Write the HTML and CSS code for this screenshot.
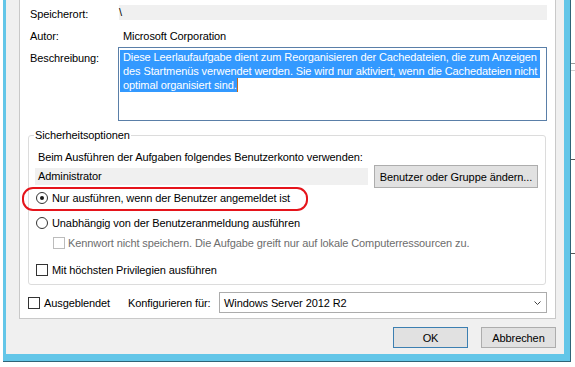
FILE: index.html
```html
<!DOCTYPE html>
<html lang="de">
<head>
    <meta charset="UTF-8">
    <meta name="viewport" content="width=device-width, initial-scale=1.0">
    <title>Eigenschaften</title>
    <link rel="stylesheet" href="styles.css">
</head>
<body>
    <div class="desktop">
        <div class="window">
            <div class="dialog">
                <div class="tab-page">
                    <div class="prop-row row-location">
                        <span class="prop-label">Speicherort:</span>
                        <span class="prop-field">\</span>
                    </div>
                    <div class="prop-row row-author">
                        <span class="prop-label">Autor:</span>
                        <span class="prop-value">Microsoft Corporation</span>
                    </div>
                    <div class="prop-row row-desc">
                        <span class="prop-label">Beschreibung:</span>
                        <div class="desc-box">
                            <span class="sel-line">Diese Leerlaufaufgabe dient zum Reorganisieren der Cachedateien, die zum Anzeigen </span>
                            <span class="sel-line">des Startmenüs verwendet werden. Sie wird nur aktiviert, wenn die Cachedateien nicht </span>
                            <span class="sel-line caret">optimal organisiert sind.</span>
                        </div>
                    </div>

                    <fieldset class="group">
                        <legend>Sicherheitsoptionen</legend>
                        <div class="group-text">Beim Ausführen der Aufgaben folgendes Benutzerkonto verwenden:</div>
                        <div class="account-row">
                            <div class="account-field">Administrator</div>
                            <button class="btn btn-wide">Benutzer oder Gruppe ändern...</button>
                        </div>
                        <div class="option opt-logged"><span class="radio checked"></span>Nur ausführen, wenn der Benutzer angemeldet ist</div>
                        <div class="option opt-any"><span class="radio"></span>Unabhängig von der Benutzeranmeldung ausführen</div>
                        <div class="option opt-nopass disabled"><span class="check"></span>Kennwort nicht speichern. Die Aufgabe greift nur auf lokale Computerressourcen zu.</div>
                        <div class="option opt-highest"><span class="check"></span>Mit höchsten Privilegien ausführen</div>
                    </fieldset>

                    <div class="config-row">
                        <div class="option hidden-opt"><span class="check"></span>Ausgeblendet</div>
                        <span class="config-label">Konfigurieren für:</span>
                        <div class="select">
                            <span>Windows Server 2012 R2</span>
                            <svg width="7" height="4" viewBox="0 0 7 4"><polyline points="0.5,0.5 3.5,3.5 6.5,0.5" fill="none" stroke="#404040" stroke-width="1"/></svg>
                        </div>
                    </div>

                    <!-- annotation drawn over the screenshot -->
                    <div class="callout"></div>
                </div>
                <div class="dialog-buttons">
                    <button class="btn btn-default">OK</button>
                    <button class="btn">Abbrechen</button>
                </div>
            </div>
        </div>
        <div class="backdrop">
            <div class="bd-line bd-a"></div>
            <div class="bd-line bd-b"></div>
            <div class="bd-line bd-c"></div>
            <div class="bd-line bd-d"></div>
        </div>
    </div>
</body>
</html>
```
FILE: styles.css
```css
body {
    margin: 0;
    background: #fff;
    font-family: "Liberation Sans", Arial, sans-serif;
    font-size: 11px;
    letter-spacing: -0.1px;
    color: #000;
}
.desktop {
    display: flex;
    width: 575px;
    height: 367px;
    overflow: hidden;
}
.window {
    align-self: flex-start;
    flex: none;
    margin-left: 3px;
    width: 568px;
    box-sizing: border-box;
    padding: 0 6px 7px 3px;
    background: #63c6e8;
    border-right: 1px solid #2f6477;
    border-bottom: 1px solid #2f6477;
}
.dialog {
    background: #f0f0f0;
    padding: 0 8px 6px 13px;
}
.tab-page {
    position: relative;
    background: #fff;
    border: 1px solid #c9c9c9;
    border-top: none;
    padding: 5px 8px 5px 8px;
}
.prop-row {
    display: flex;
    padding-left: 2px;
}
.prop-label {
    width: 89px;
    flex: none;
}
.row-location .prop-label {
    padding-top: 2px;
    line-height: 15px;
}
.prop-field {
    flex: 1;
    height: 15px;
    line-height: 15px;
    background: #f0f0f0;
}
.row-author {
    margin-top: 7px;
    line-height: 14px;
}
.prop-value {
    padding-left: 4px;
}
.row-desc {
    margin-top: 4px;
    line-height: 14px;
}
.row-desc .prop-label {
    padding-top: 4px;
}
.desc-box {
    flex: 1;
    margin-left: -1px;
    height: 74px;
    box-sizing: border-box;
    border: 1px solid #5a7fa8;
    padding: 2px 1px;
}
.sel-line {
    display: block;
    width: fit-content;
    padding-left: 3px;
    background: #3399ff;
    color: #fff;
    white-space: pre;
}
.sel-line.caret {
    box-shadow: 1px 0 0 #c66a1a;
}
.group {
    margin: 7px 1px 0 0;
    border: 1px solid #dcdcdc;
    border-radius: 3px;
    padding: 0 7px 6px 6px;
    min-width: 0;
}
.group legend {
    padding: 0 1px;
    margin-left: -1px;
    line-height: 14px;
}
.group-text {
    margin-top: 8px;
    padding-left: 3px;
    line-height: 14px;
}
.account-row {
    display: flex;
    align-items: center;
    margin-top: 1px;
    height: 23px;
}
.account-field {
    width: 333px;
    height: 17px;
    line-height: 17px;
    padding-left: 3px;
    box-sizing: border-box;
    background: #f0f0f0;
}
.btn {
    font: inherit;
    letter-spacing: inherit;
    color: #000;
    padding: 0;
    margin: 0;
    background: #e1e1e1;
    border: 1px solid #adadad;
    width: 75px;
    height: 21px;
}
.btn-wide {
    margin-left: 6px;
    width: 164px;
    height: 23px;
}
.btn-default {
    border-color: #3c7fb1;
}
.option {
    display: flex;
    align-items: center;
    height: 16px;
    line-height: 16px;
}
.radio, .check {
    flex: none;
    width: 12px;
    height: 12px;
    box-sizing: border-box;
    border: 1px solid #333;
    background: #fff;
    margin-right: 4px;
}
.radio {
    border-radius: 50%;
    margin-left: 1px;
    display: flex;
    align-items: center;
    justify-content: center;
}
.radio.checked::after {
    content: '';
    width: 4px;
    height: 4px;
    border-radius: 50%;
    background: #1a1a1a;
}
.opt-logged {
    margin-top: 2px;
}
.opt-any {
    margin-top: 9px;
}
.opt-nopass {
    margin-top: 4px;
    padding-left: 18px;
}
.opt-nopass .check {
    margin-right: 3px;
}
.disabled {
    color: #6d6d6d;
}
.disabled .check {
    border-color: #bcbcbc;
}
.opt-highest {
    margin-top: 11px;
}
.opt-highest .check {
    margin-left: 1px;
}
.config-row {
    display: flex;
    align-items: center;
    margin-top: 7px;
    height: 21px;
}
.hidden-opt {
    width: 100px;
    flex: none;
}
.config-label {
    width: 91px;
    flex: none;
}
.select {
    flex: 1;
    height: 21px;
    box-sizing: border-box;
    border: 1px solid #acacac;
    background: #fff;
    display: flex;
    align-items: center;
    justify-content: space-between;
    padding: 0 5px 0 4px;
}
.callout {
    position: absolute;
    left: 2px;
    top: 187px;
    width: 286px;
    height: 24px;
    box-sizing: border-box;
    border: 2px solid #e5141b;
    border-radius: 11px;
}
.dialog-buttons {
    display: flex;
    justify-content: flex-end;
    gap: 13px;
    margin-top: 8px;
}
.backdrop {
    flex: 1;
    background: #fff;
}
.bd-line {
    height: 1px;
    background: #9a9a9a;
}
.bd-a {
    margin-top: 63px;
}
.bd-b {
    margin-top: 6px;
    background: #cfcfcf;
}
.bd-c {
    margin-top: 88px;
    background: #555;
}
.bd-d {
    margin-top: 93px;
    background: #555;
}
```
